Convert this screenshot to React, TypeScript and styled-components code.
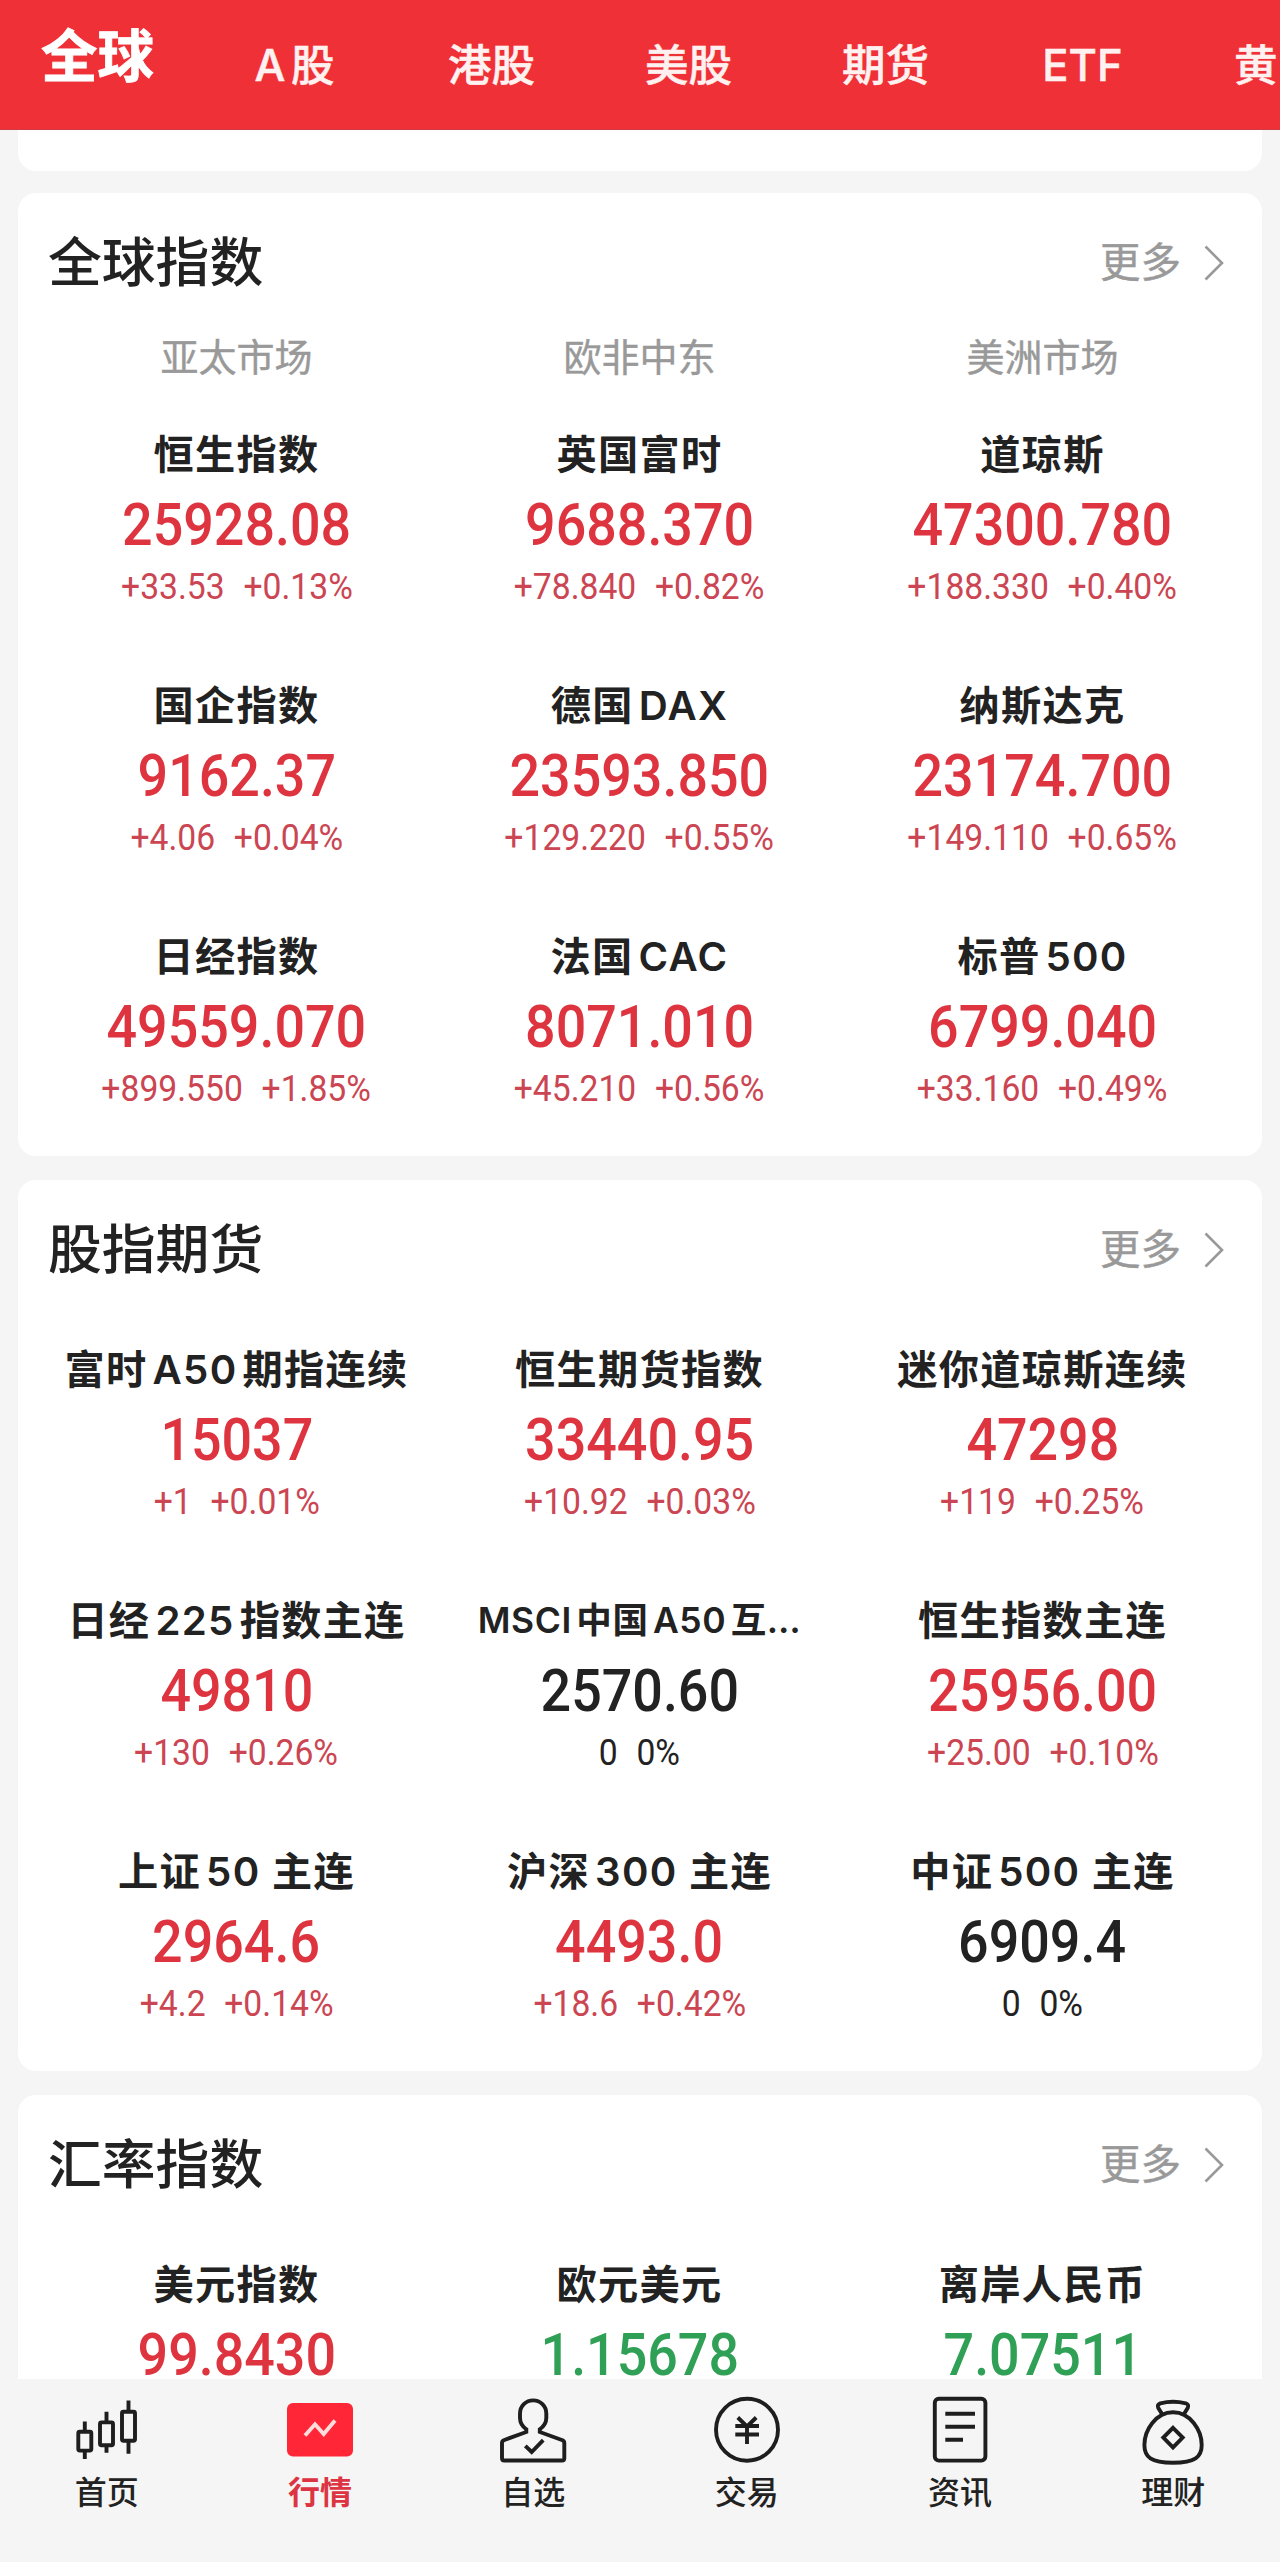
import React from 'react';
import styled, { createGlobalStyle } from 'styled-components';

const GlobalStyle = createGlobalStyle`
  * { box-sizing: border-box; }
  body {
    margin: 0;
    background: #f5f5f5;
    font-family: Inter, "Noto Sans CJK SC", sans-serif;
    color: #222;
  }
`;

const Page = styled.div`
  width: 1280px;
  height: 2562px;
  display: flex;
  flex-direction: column;
  overflow: hidden;
  background: #f5f5f5;
`;

const Header = styled.header`
  flex: none;
  height: 130px;
  background: #ef3036;
  border-bottom: 1px solid #cf3b40;
  display: flex;
  overflow: hidden;
  color: #fff;
`;

const HeaderTab = styled.button<{ $active?: boolean; $last?: boolean }>`
  flex: none;
  width: ${p => (p.$last ? 98 : 197)}px;
  height: 130px;
  padding: ${p => (p.$active ? '0 2px 16px 0' : p.$last ? '0 0 0 52px' : '0 2px 0 0')};
  border: 0;
  background: none;
  color: ${p => (p.$active ? '#fff' : '#fff1f0')};
  font-family: inherit;
  font-size: ${p => (p.$active ? 56.5 : 43.5)}px;
  font-weight: ${p => (p.$active ? 700 : 500)};
  -webkit-text-stroke: ${p => (p.$active ? 0.8 : 0.5)}px currentColor;
  line-height: 64px;
  text-align: ${p => (p.$last ? 'left' : 'center')};
  white-space: nowrap;
  text-autospace: normal;
`;

const Main = styled.main`
  flex: 1;
  min-height: 0;
  overflow: hidden;
  padding: 0 18px;
  display: flex;
  flex-direction: column;
  gap: 24px;
`;

const CardTail = styled.div`
  flex: none;
  height: 41px;
  margin-bottom: -2px;
  background: #fff;
  border-radius: 0 0 18px 18px;
`;

const Card = styled.section<{ $h: number }>`
  flex: none;
  height: ${p => p.$h}px;
  background: #fff;
  border-radius: 18px;
  padding: 0 17px;
`;

const CardHead = styled.div`
  height: 138px;
  padding: 2px 21px 0 13px;
  display: flex;
  align-items: center;
  justify-content: space-between;
`;

const Title = styled.h2`
  margin: 0;
  font-size: 53.8px;
  font-weight: 500;
  line-height: 70px;
`;

const More = styled.a`
  display: flex;
  align-items: center;
  gap: 23px;
  color: #999;
  font-size: 40.5px;
  line-height: 50px;
  -webkit-text-stroke: 0.4px currentColor;
`;

const Grid = styled.div`
  display: grid;
  grid-template-columns: repeat(3, 403px);
  text-align: center;
`;

const Market = styled.div`
  height: 72px;
  padding-top: 2px;
  color: #999;
  font-size: 38px;
  line-height: 48px;
  -webkit-text-stroke: 0.4px currentColor;
`;

const Quote = styled.div`
  height: 251px;
  padding-top: 27px;
  display: flex;
  flex-direction: column;
  align-items: center;
  white-space: nowrap;
`;

const Name = styled.div<{ $small?: boolean }>`
  height: 50px;
  line-height: 50px;
  font-size: ${p => (p.$small ? 35.5 : 40.2)}px;
  letter-spacing: ${p => (p.$small ? 0.6 : 1.3)}px;
  font-weight: 600;
  text-autospace: normal;
`;

type Tone = 'up' | 'down' | 'flat';
const priceColor = { up: '#de343f', down: '#2fa055', flat: '#222' };
const changeColor = { up: '#cb4552', down: '#2fa055', flat: '#222' };

const Price = styled.div<{ $tone: Tone }>`
  height: 66px;
  margin-top: 12px;
  line-height: 66px;
  font-family: Roboto, sans-serif;
  font-size: 59px;
  font-weight: 500;
  color: ${p => priceColor[p.$tone]};
  transform: scaleX(0.912);
`;

const Change = styled.div<{ $tone: Tone }>`
  height: 40px;
  margin-top: 9px;
  line-height: 40px;
  display: flex;
  gap: 20px;
  font-family: Roboto, sans-serif;
  font-size: 36px;
  color: ${p => changeColor[p.$tone]};
  transform: scaleX(0.935);
`;

const Nav = styled.nav`
  flex: none;
  height: 183px;
  display: grid;
  grid-template-columns: repeat(6, 1fr);
`;

const NavItem = styled.a<{ $active?: boolean }>`
  display: flex;
  flex-direction: column;
  align-items: center;
  padding-top: 15px;
  font-size: 32px;
  line-height: 40px;
  font-weight: ${p => (p.$active ? 700 : 500)};
  color: ${p => (p.$active ? '#dc3442' : '#222')};
  svg { display: block; margin-bottom: 7px; }
`;

type Q = [string, string, string, string, Tone?];

const globalIndexes: Q[] = [
  ['恒生指数', '25928.08', '+33.53', '+0.13%'],
  ['英国富时', '9688.370', '+78.840', '+0.82%'],
  ['道琼斯', '47300.780', '+188.330', '+0.40%'],
  ['国企指数', '9162.37', '+4.06', '+0.04%'],
  ['德国DAX', '23593.850', '+129.220', '+0.55%'],
  ['纳斯达克', '23174.700', '+149.110', '+0.65%'],
  ['日经指数', '49559.070', '+899.550', '+1.85%'],
  ['法国CAC', '8071.010', '+45.210', '+0.56%'],
  ['标普500', '6799.040', '+33.160', '+0.49%'],
];

const futures: Q[] = [
  ['富时A50期指连续', '15037', '+1', '+0.01%'],
  ['恒生期货指数', '33440.95', '+10.92', '+0.03%'],
  ['迷你道琼斯连续', '47298', '+119', '+0.25%'],
  ['日经225指数主连', '49810', '+130', '+0.26%'],
  ['MSCI中国A50互…', '2570.60', '0', '0%', 'flat'],
  ['恒生指数主连', '25956.00', '+25.00', '+0.10%'],
  ['上证50 主连', '2964.6', '+4.2', '+0.14%'],
  ['沪深300 主连', '4493.0', '+18.6', '+0.42%'],
  ['中证500 主连', '6909.4', '0', '0%', 'flat'],
];

const rates: Q[] = [
  ['美元指数', '99.8430', '', ''],
  ['欧元美元', '1.15678', '', '', 'down'],
  ['离岸人民币', '7.07511', '', '', 'down'],
];

function Section({ title, height, markets, quotes }: { title: string; height: number; markets?: string[]; quotes: Q[] }) {
  return (
    <Card $h={height}>
      <CardHead>
        <Title>{title}</Title>
        <More>
          更多
          <svg width="20" height="36" viewBox="0 0 20 36" fill="none" stroke="#999" strokeWidth="2.6">
            <path d="M1.5 1.5 L18 18 L1.5 34.5" />
          </svg>
        </More>
      </CardHead>
      <Grid>
        {markets?.map(m => <Market key={m}>{m}</Market>)}
        {quotes.map(([name, price, change, pct, tone = 'up']) => (
          <Quote key={name}>
            <Name $small={name.startsWith('MSCI')}>{name}</Name>
            <Price $tone={tone}>{price}</Price>
            {change && (
              <Change $tone={tone}>
                <span>{change}</span>
                <span>{pct}</span>
              </Change>
            )}
          </Quote>
        ))}
      </Grid>
    </Card>
  );
}

const Icon = ({ children }: { children: React.ReactNode }) => (
  <svg width="72" height="72" viewBox="0 0 72 72" fill="none" stroke="#1e1e1e" strokeWidth="3.9">
    {children}
  </svg>
);

const navItems = [
  {
    label: '首页',
    icon: (
      <Icon>
        <rect x="7.3" y="37.8" width="13" height="18.8" rx="1.5" />
        <rect x="29" y="28.4" width="13" height="22.8" rx="1.5" />
        <rect x="51" y="17.8" width="13" height="29" rx="1.5" />
        <path d="M13.8 27.5V38M13.8 57V65M35.5 17.7V28M35.5 51V58.7M57.5 6.5V17M57.5 47V59.7" />
      </Icon>
    ),
  },
  {
    label: '行情',
    active: true,
    icon: (
      <Icon>
        <rect x="3" y="9" width="66" height="53.5" rx="6" fill="#ff2637" stroke="none" />
        <path d="M21 41.5L31 30.3L39.7 40L51 26.5" stroke="#ffdcdc" />
      </Icon>
    ),
  },
  {
    label: '自选',
    icon: (
      <Icon>
        <path d="M29.3 38V35.3C25.5 32.5 23 28.5 23 24V19.5A13.15 13.15 0 0 1 49.3 19.5V24C49.3 28.5 46.6 32.5 42.8 35.3V38L65.5 46.2Q67.3 47 67.3 49V64.2Q67.3 66.5 65 66.5H7.3Q5 66.5 5 64.2V49Q5 47 6.8 46.2Z" />
        <path d="M28.3 51.8L34.7 58L46.2 46.2" />
      </Icon>
    ),
  },
  {
    label: '交易',
    icon: (
      <Icon>
        <circle cx="36" cy="35.7" r="31" />
        <path d="M26.8 23.5L36 32.5L45.2 23.5M24.3 32H48M24.3 40.5H48M36 32V50" />
      </Icon>
    ),
  },
  {
    label: '资讯',
    icon: (
      <Icon>
        <rect x="10.8" y="4.8" width="50.6" height="61.8" rx="4" />
        <path d="M21.3 19.7H51M21.3 32.7H51M21.3 45.7H39" />
      </Icon>
    ),
  },
  {
    label: '理财',
    icon: (
      <Icon>
        <path d="M36 18.3C19 18.3 7.4 36 7.4 51C7.4 63 14 68.7 36 68.7C58 68.7 64.7 63 64.7 51C64.7 36 53 18.3 36 18.3Z" />
        <path d="M25.3 20.5L21.2 13.8Q19.8 10.6 23.3 9.3Q36 6.3 48.8 9.3Q52.2 10.6 50.8 13.8L46.7 20.5M36 33.8L45.7 43.6L36 53.4L26.3 43.6Z" />
      </Icon>
    ),
  },
];

export default function App() {
  return (
    <>
      <GlobalStyle />
      <Page>
        <Header>
          {['全球', 'A股', '港股', '美股', '期货', 'ETF', '黄'].map((t, i) => (
            <HeaderTab key={t} $active={i === 0} $last={i === 6}>{t}</HeaderTab>
          ))}
        </Header>
        <Main>
          <CardTail />
          <Section title="全球指数" height={963} markets={['亚太市场', '欧非中东', '美洲市场']} quotes={globalIndexes} />
          <Section title="股指期货" height={891} quotes={futures} />
          <Section title="汇率指数" height={400} quotes={rates} />
        </Main>
        <Nav>
          {navItems.map(n => (
            <NavItem key={n.label} $active={n.active}>
              {n.icon}
              {n.label}
            </NavItem>
          ))}
        </Nav>
      </Page>
    </>
  );
}
